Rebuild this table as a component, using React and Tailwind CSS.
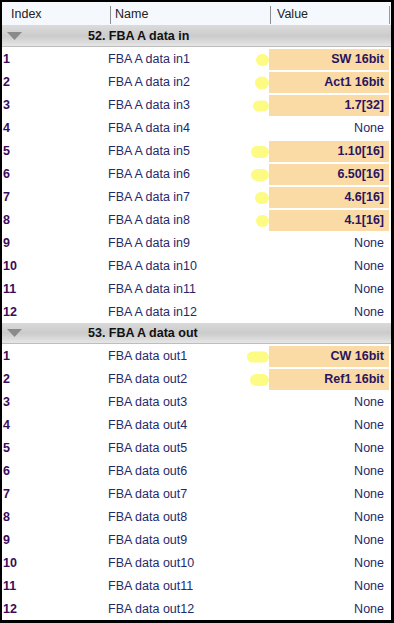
import React from "react";

const groupIn = [
    { name: "FBA A data in1", value: "SW 16bit", dot: "w-[13px] h-[12px]" },
    { name: "FBA A data in2", value: "Act1 16bit", dot: "w-[14px] h-[13px]" },
    { name: "FBA A data in3", value: "1.7[32]", dot: "w-[16px] h-[11px]" },
    { name: "FBA A data in4", value: "None" },
    { name: "FBA A data in5", value: "1.10[16]", dot: "w-[18px] h-[12px]" },
    { name: "FBA A data in6", value: "6.50[16]", dot: "w-[18px] h-[12px]" },
    { name: "FBA A data in7", value: "4.6[16]", dot: "w-[14px] h-[12px]" },
    { name: "FBA A data in8", value: "4.1[16]", dot: "w-[13px] h-[12px]" },
    { name: "FBA A data in9", value: "None" },
    { name: "FBA A data in10", value: "None" },
    { name: "FBA A data in11", value: "None" },
    { name: "FBA A data in12", value: "None" },
];

const groupOut = [
    { name: "FBA data out1", value: "CW 16bit", dot: "w-[22px] h-[11px]" },
    { name: "FBA data out2", value: "Ref1 16bit", dot: "w-[19px] h-[12px]" },
    ...Array.from({ length: 10 }, (_, i) => ({
        name: `FBA data out${i + 3}`,
        value: "None",
    })),
];

const GroupHeader = ({ title }) => (
    <div className="relative flex items-center h-[21px] pt-px bg-gradient-to-b from-[#dadada] via-[#cbcbcb] to-[#e6e6e6] border-b border-[#bdbdbd]">
        <svg className="absolute left-[5px] top-[6px]" width="15" height="8" viewBox="0 0 15 8">
            <polygon points="0,0 15,0 7.5,8" fill="#8a8a8a" />
        </svg>
        <span className="pl-[86px] font-bold text-[12.5px] text-[#111]">{title}</span>
    </div>
);

const Row = ({ index, row }) => {
    const filled = row.value !== "None";
    return (
        <div className="flex h-[23px] text-[12.5px]">
            <div className="w-[106px] flex items-center pt-[2px] pl-[1px] font-bold text-[#3b0b5c]">
                {index}
            </div>
            <div className="flex-1 flex items-center pt-[2px] text-[#1f2a6b]">{row.name}</div>
            {filled ? (
                <div className="relative self-end mr-[2px] w-[120px] h-[21px] bg-[#fadba5] flex items-center justify-end pr-[5px] font-bold text-[#2a1460]">
                    <span
                        className={`absolute right-full top-1/2 -translate-y-1/2 rounded-full bg-[#fdfb84] ${row.dot}`}
                    />
                    {row.value}
                </div>
            ) : (
                <div className="w-[120px] mr-[2px] flex items-center justify-end pt-[2px] pr-[5px] text-[#1f2a6b]">
                    {row.value}
                </div>
            )}
        </div>
    );
};

export default function App() {
    return (
        <div
            className="w-[394px] h-[623px] overflow-hidden bg-white border-black border-t-2 border-l-2 border-r-[3px] border-b-[3px]"
            style={{ fontFamily: '"Liberation Sans", Arial, sans-serif' }}
        >
            {/* Column header */}
            <div className="flex items-center h-[24px] pt-[2px] bg-[#f5f9fd] border-b border-[#dadada] text-[12.5px] text-[#222]">
                <div className="w-[108px] pl-[9px]">Index</div>
                <div className="w-px h-[18px] bg-[#8c8c8c]" />
                <div className="w-[159px] pl-[4px]">Name</div>
                <div className="w-px h-[18px] bg-[#8c8c8c]" />
                <div className="flex-1 pl-[6px]">Value</div>
                <div className="w-px h-[18px] bg-[#9a9a9a] mr-[1px]" />
            </div>

            <GroupHeader title="52. FBA A data in" />
            {groupIn.map((row, i) => (
                <Row key={row.name} index={i + 1} row={row} />
            ))}

            <GroupHeader title="53. FBA A data out" />
            {groupOut.map((row, i) => (
                <Row key={row.name} index={i + 1} row={row} />
            ))}
        </div>
    );
}
